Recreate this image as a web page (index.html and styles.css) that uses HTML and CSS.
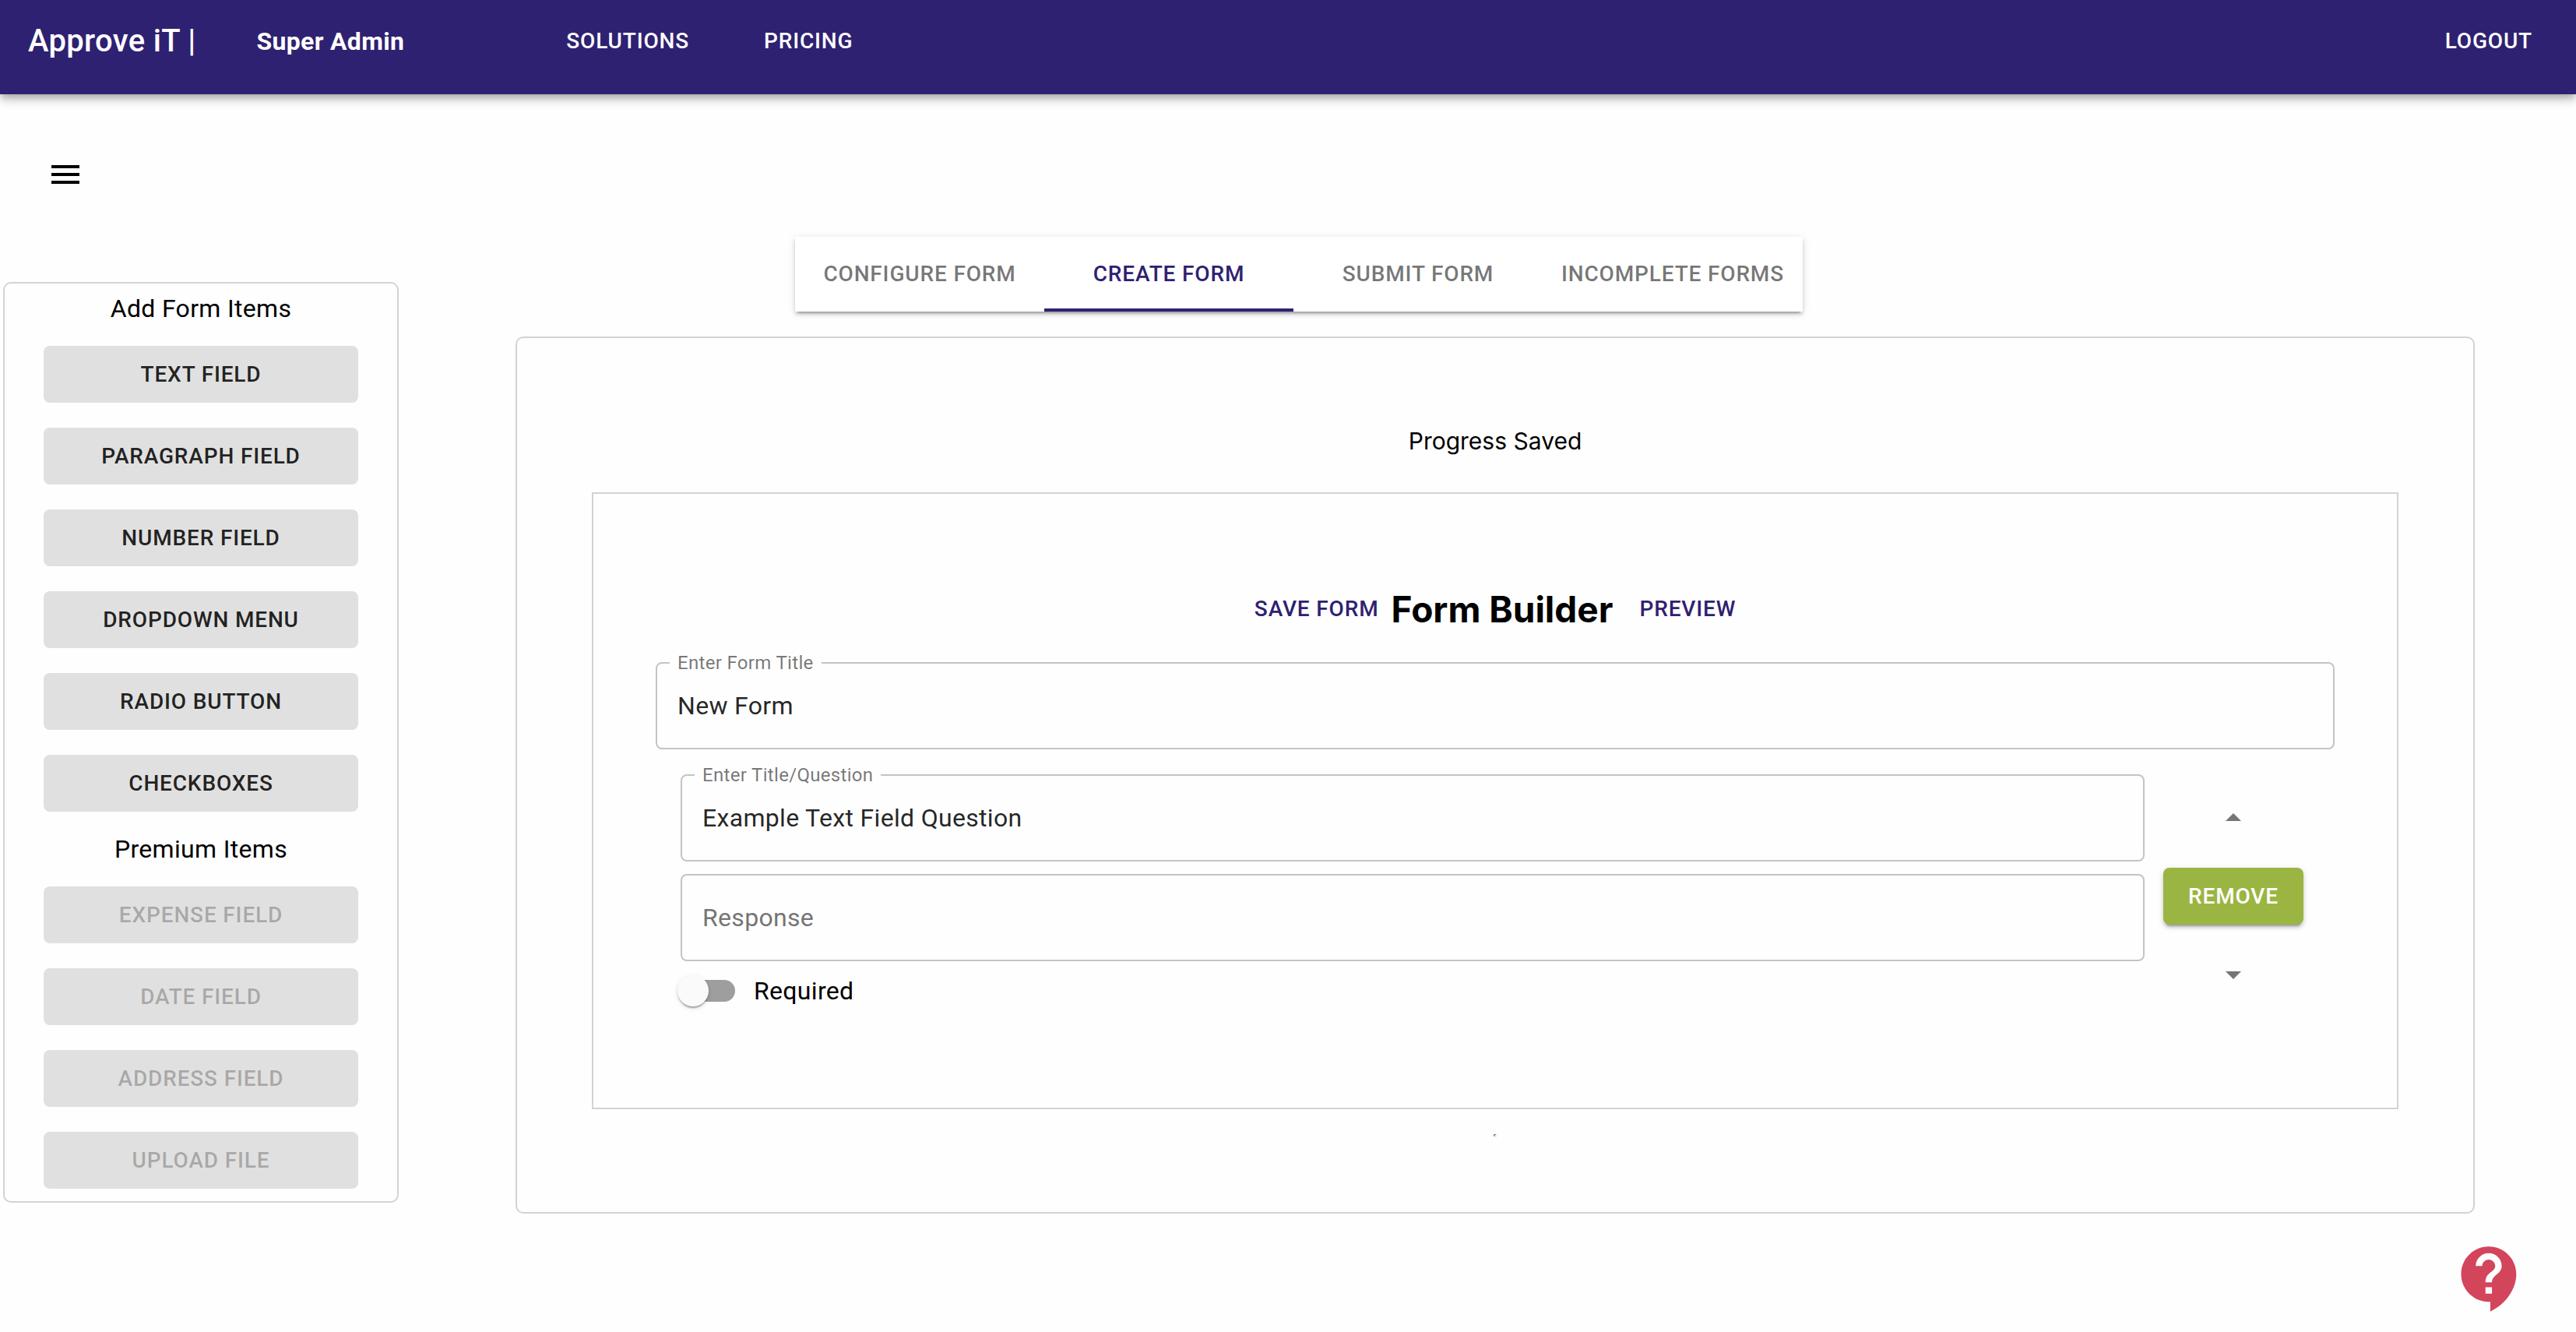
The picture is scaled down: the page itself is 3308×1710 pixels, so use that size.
FILE: index.html
```html
<!DOCTYPE html>
<html lang="en">
<head>
<meta charset="utf-8">
<title>Approve iT | Form Builder</title>
<link rel="stylesheet" href="styles.css">
</head>
<body>
<header class="app-bar">
  <span class="brand">Approve iT |</span>
  <span class="role">Super Admin</span>
  <nav class="app-nav">
    <a class="nav-link" href="#solutions">SOLUTIONS</a>
    <a class="nav-link" href="#pricing">PRICING</a>
  </nav>
  <button class="nav-link logout" type="button">LOGOUT</button>
</header>

<div class="menu-row">
  <button class="icon-button" type="button" aria-label="Open menu">
    <svg class="icon" viewBox="0 0 24 24" aria-hidden="true"><path d="M3 18h18v-2H3v2zm0-5h18v-2H3v2zm0-7v2h18V6H3z"/></svg>
  </button>
</div>

<div class="layout">
  <aside class="palette">
    <h2 class="palette-title">Add Form Items</h2>
    <div class="palette-group">
      <button class="palette-item" type="button">TEXT FIELD</button>
      <button class="palette-item" type="button">PARAGRAPH FIELD</button>
      <button class="palette-item" type="button">NUMBER FIELD</button>
      <button class="palette-item" type="button">DROPDOWN MENU</button>
      <button class="palette-item" type="button">RADIO BUTTON</button>
      <button class="palette-item" type="button">CHECKBOXES</button>
    </div>
    <h2 class="palette-title">Premium Items</h2>
    <div class="palette-group">
      <button class="palette-item" type="button" disabled>EXPENSE FIELD</button>
      <button class="palette-item" type="button" disabled>DATE FIELD</button>
      <button class="palette-item" type="button" disabled>ADDRESS FIELD</button>
      <button class="palette-item" type="button" disabled>UPLOAD FILE</button>
    </div>
  </aside>

  <main class="workspace">
    <div class="tabs" role="tablist">
      <button class="tab" type="button" role="tab">CONFIGURE FORM</button>
      <button class="tab tab-active" type="button" role="tab" aria-selected="true">CREATE FORM</button>
      <button class="tab" type="button" role="tab">SUBMIT FORM</button>
      <button class="tab" type="button" role="tab">INCOMPLETE FORMS</button>
    </div>

    <section class="card">
      <p class="status">Progress Saved</p>
      <form class="builder">
        <div class="builder-head">
          <button class="text-button" type="button">SAVE FORM</button>
          <h1 class="builder-title">Form Builder</h1>
          <button class="text-button preview" type="button">PREVIEW</button>
        </div>
        <div class="field">
          <label class="field-label" for="form-title">Enter Form Title</label>
          <input class="field-input" id="form-title" type="text" value="New Form">
        </div>
        <div class="question">
          <div class="question-fields">
            <div class="field">
              <label class="field-label" for="question-title">Enter Title/Question</label>
              <input class="field-input" id="question-title" type="text" value="Example Text Field Question">
            </div>
            <div class="field field-response">
              <input class="field-input" type="text" placeholder="Response" aria-label="Response">
            </div>
            <label class="switch-row">
              <input class="switch" type="checkbox">
              <span>Required</span>
            </label>
          </div>
          <div class="question-actions">
            <button class="icon-button muted" type="button" aria-label="Move up">
              <svg class="icon" viewBox="0 0 24 24" aria-hidden="true"><path d="M7 14l5-5 5 5z"/></svg>
            </button>
            <button class="remove" type="button">REMOVE</button>
            <button class="icon-button muted" type="button" aria-label="Move down">
              <svg class="icon" viewBox="0 0 24 24" aria-hidden="true"><path d="M7 10l5 5 5-5z"/></svg>
            </button>
          </div>
        </div>
      </form>
      <div class="marker"></div>
    </section>
  </main>
</div>

<button class="help" type="button" aria-label="Help">
  <svg class="help-icon" viewBox="0 0 24 24" aria-hidden="true"><path d="M11.5 2C6.81 2 3 5.81 3 10.5S6.81 19 11.5 19h.5v3c4.86-2.34 8-7 8-11.5C20 5.81 16.19 2 11.5 2zm1 14.5h-2v-2h2v2zm0-3.5h-2c0-3.25 3-3 3-5 0-1.1-.9-2-2-2s-2 .9-2 2h-2c0-2.21 1.79-4 4-4s4 1.79 4 4c0 2.5-3 2.75-3 5z"/></svg>
</button>
</body>
</html>
```
FILE: styles.css
```css
:root {
  --primary: #2f2171;
  --line: #d3d3d3;
  --field-line: #c4c4c4;
  --text: rgba(0, 0, 0, 0.87);
  --muted: rgba(0, 0, 0, 0.54);
}

* {
  box-sizing: border-box;
}

body {
  margin: 0;
  background: #fefefe;
  color: #000;
  font-family: Roboto, "Liberation Sans", sans-serif;
  font-size: 32px;
  line-height: 48px;
  letter-spacing: 0.01em;
}

button,
input {
  margin: 0;
  padding: 0;
  border: 0;
  background: none;
  color: inherit;
  font: inherit;
  letter-spacing: inherit;
}

button {
  cursor: pointer;
}

h1,
h2,
p {
  margin: 0;
}

/* Top bar */
.app-bar {
  display: flex;
  align-items: center;
  height: 121px;
  padding: 0 56px 16px 36px;
  background: var(--primary);
  color: #fff;
  box-shadow: 0 4px 8px -2px rgba(0, 0, 0, 0.2), 0 8px 10px rgba(0, 0, 0, 0.14), 0 2px 20px rgba(0, 0, 0, 0.12);
}

.brand {
  font-size: 40px;
  font-weight: 500;
}

.role {
  margin-left: 78px;
  font-weight: 700;
}

.app-nav {
  display: flex;
  gap: 96px;
  margin-left: 208px;
}

.nav-link {
  color: inherit;
  font-size: 28px;
  font-weight: 500;
  letter-spacing: 0.03em;
  text-decoration: none;
}

.logout {
  margin-left: auto;
}

.menu-row {
  padding: 55px 36px 0;
}

.icon-button {
  display: block;
  padding: 24px;
}

.icon {
  display: block;
  width: 48px;
  height: 48px;
  fill: currentColor;
}

.muted {
  color: var(--muted);
}

/* Page columns */
.layout {
  display: flex;
  align-items: flex-start;
  gap: 150px;
  padding: 32px 130px 32px 4px;
}

.palette {
  flex: 0 0 508px;
  margin-top: 58px;
  padding: 8px 50px 16px;
  border: 2px solid var(--line);
  border-radius: 10px;
}

.palette-title {
  font-size: 32px;
  font-weight: 400;
  text-align: center;
}

.palette-group {
  display: flex;
  flex-direction: column;
  gap: 32px;
  padding-top: 24px;
}

.palette-group + .palette-title {
  margin-top: 24px;
}

.palette-item {
  height: 73px;
  border-radius: 8px;
  background: #e0e0e0;
  color: var(--text);
  font-size: 28px;
  font-weight: 500;
  letter-spacing: 0.03em;
}

.palette-item:disabled {
  color: rgba(0, 0, 0, 0.26);
  cursor: default;
}

.workspace {
  flex: 1;
  min-width: 0;
}

.tabs {
  display: flex;
  width: max-content;
  margin-left: 359px;
  background: #fff;
  box-shadow: 0 6px 2px -4px rgba(0, 0, 0, 0.2), 0 4px 4px rgba(0, 0, 0, 0.14), 0 2px 10px rgba(0, 0, 0, 0.12);
}

.tab {
  min-width: 320px;
  height: 96px;
  padding: 4px 24px 0;
  border-bottom: 4px solid transparent;
  color: var(--muted);
  font-size: 28px;
  font-weight: 500;
  letter-spacing: 0.03em;
}

.tab-active {
  border-color: var(--primary);
  color: var(--primary);
}

.card {
  margin-top: 32px;
  padding: 108px 96px 96px;
  border: 2px solid var(--line);
  border-radius: 10px;
}

.status {
  font-family: Inter, Roboto, sans-serif;
  font-size: 30px;
  letter-spacing: normal;
  text-align: center;
}

.builder {
  margin-top: 42px;
  padding: 110px 80px 123px;
  border: 2px solid var(--line);
}

.builder-head {
  display: flex;
  align-items: center;
  justify-content: center;
  margin-bottom: 30px;
}

.builder-title {
  font-family: Inter, Roboto, sans-serif;
  font-size: 46px;
  font-weight: 700;
  line-height: 76px;
  letter-spacing: normal;
}

.text-button {
  padding: 12px 16px;
  color: var(--primary);
  font-size: 28px;
  font-weight: 500;
  letter-spacing: 0.03em;
}

.preview {
  margin-left: 18px;
}

/* Outlined text fields */
.field {
  position: relative;
}

.field-label {
  position: absolute;
  top: -11px;
  left: 18px;
  padding: 0 10px;
  background: #fefefe;
  color: var(--muted);
  font-size: 24px;
  line-height: 24px;
}

.field-input {
  display: block;
  width: 100%;
  height: 112px;
  padding: 0 26px;
  border: 2px solid var(--field-line);
  border-radius: 8px;
  color: var(--text);
}

.field-input::placeholder {
  color: #757575;
  opacity: 1;
}

.question {
  display: grid;
  grid-template-columns: 1fr 180px;
  gap: 24px;
  margin-top: 32px;
  padding: 0 40px 0 32px;
}

.field-response {
  margin-top: 16px;
}

.switch-row {
  display: flex;
  align-items: center;
  gap: 24px;
  width: max-content;
  margin: 14px 0 0 -4px;
}

.switch {
  position: relative;
  width: 74px;
  height: 40px;
  appearance: none;
}

.switch::before {
  content: "";
  position: absolute;
  inset: 6px 0 6px 6px;
  border-radius: 14px;
  background: #9e9e9e;
}

.switch::after {
  content: "";
  position: absolute;
  top: 0;
  left: 0;
  width: 40px;
  height: 40px;
  border-radius: 50%;
  background: #fafafa;
  box-shadow: 0 4px 2px -2px rgba(0, 0, 0, 0.2), 0 2px 2px rgba(0, 0, 0, 0.14), 0 2px 6px rgba(0, 0, 0, 0.12);
}

.question-actions {
  display: flex;
  flex-direction: column;
  align-items: center;
  gap: 16px;
  padding-top: 8px;
}

.remove {
  width: 100%;
  height: 73px;
  border-radius: 8px;
  background: #9bb543;
  color: #fff;
  font-size: 28px;
  font-weight: 500;
  letter-spacing: 0.03em;
  box-shadow: 0 6px 2px -4px rgba(0, 0, 0, 0.2), 0 4px 4px rgba(0, 0, 0, 0.14), 0 2px 10px rgba(0, 0, 0, 0.12);
}

.marker {
  width: 4px;
  height: 4px;
  margin: 32px auto 0;
  background: linear-gradient(135deg, #8c8c8c 50%, #ececec 50%);
}

.help {
  position: fixed;
  right: 60px;
  bottom: 18px;
}

.help-icon {
  display: block;
  width: 100px;
  height: 100px;
  fill: #d3455b;
}
```
